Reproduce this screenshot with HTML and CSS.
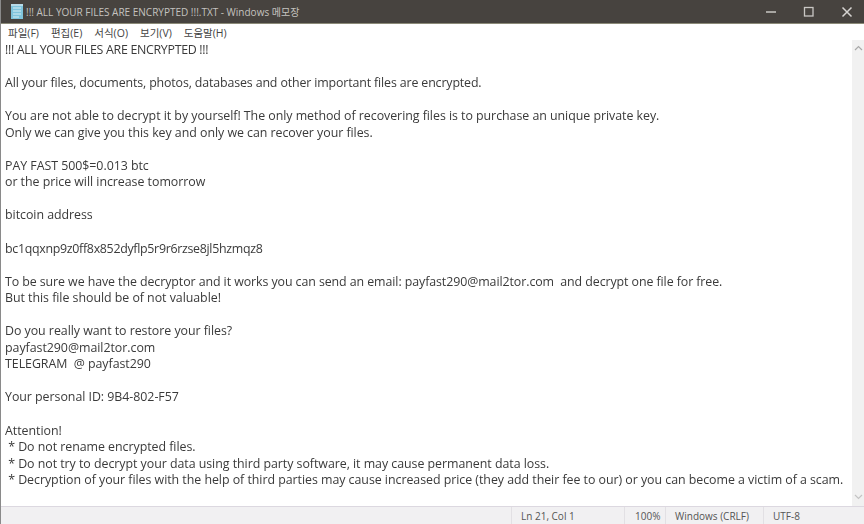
FILE: index.html
```html
<!DOCTYPE html>
<html lang="ko">
<head>
<meta charset="utf-8">
<title>Notepad</title>
<link rel="stylesheet" href="styles.css">
</head>
<body>
<div class="window">
  <header class="titlebar">
    <svg class="app-icon" width="14" height="16" viewBox="0 0 14 16"><rect x="1" y="1" width="12" height="14" fill="#7fc4dc"/><path d="M3 4h8M3 7h8M3 10h8M3 13h6" stroke="#d8eef5" stroke-width="1"/><rect x="1" y="0" width="12" height="2" fill="#b8dbe8"/></svg>
    <span class="title">!!! ALL YOUR FILES ARE ENCRYPTED !!!.TXT - Windows 메모장</span>
    <div class="controls">
      <svg class="ctl" width="12" height="12" viewBox="0 0 12 12"><path d="M1 6h10" stroke="#c9c7c4" stroke-width="1.5"/></svg>
      <svg class="ctl" width="12" height="12" viewBox="0 0 12 12"><rect x="1.5" y="1.5" width="8.5" height="8.5" fill="none" stroke="#c9c7c4" stroke-width="1.3"/></svg>
      <svg class="ctl" width="12" height="12" viewBox="0 0 12 12"><path d="M1.5 1.5l9 9M10.5 1.5l-9 9" stroke="#d6d4d1" stroke-width="1.5"/></svg>
    </div>
  </header>
  <nav class="menubar">
    <span>파일(F)</span><span>편집(E)</span><span>서식(O)</span><span>보기(V)</span><span>도움말(H)</span>
  </nav>
  <main class="editor">
<pre class="text"><span class="tight-lg">!!! ALL YOUR FILES ARE ENCRYPTED !!!</span>

<span class="tight-sm">All your files, documents, photos, databases and other important files are encrypted.</span>

You are not able to decrypt it by yourself! The only method of recovering files is to purchase an unique private key.
Only we can give you this key and only we can recover your files.

PAY FAST 500$=0.013 btc
or the price will increase tomorrow

bitcoin address

<span class="tight-lg">bc1qqxnp9z0ff8x852dyflp5r9r6rzse8jl5hzmqz8</span>

<span class="tight-xs">To be sure we have the decryptor and it works you can send an email: payfast290@mail2tor.com  and decrypt one file for free.</span>
But this file should be of not valuable!

Do you really want to restore your files?
payfast290@mail2tor.com
TELEGRAM  @ payfast290

Your personal ID: 9B4-802-F57

Attention!
 * Do not rename encrypted files.
 * Do not try to decrypt your data using third party software, it may cause permanent data loss.
 * Decryption of your files with the help of third parties may cause increased price (they add their fee to our) or you can become a victim of a scam.</pre>
    <div class="scrollbar">
      <svg width="9" height="6" viewBox="0 0 9 6"><path d="M1 5l3.500-3.500L8 5" fill="none" stroke="#a9a9a9" stroke-width="1.2"/></svg>
      <svg width="9" height="6" viewBox="0 0 9 6"><path d="M1 1l3.500 3.500L8 1" fill="none" stroke="#c4c4c4" stroke-width="1.2"/></svg>
    </div>
  </main>
  <footer class="statusbar">
    <span class="cell cell-pos">Ln 21, Col 1</span>
    <span class="cell cell-zoom">100%</span>
    <span class="cell cell-eol">Windows (CRLF)</span>
    <span class="cell cell-enc">UTF-8</span>
  </footer>
</div>
</body>
</html>
```
FILE: styles.css
```css
* { box-sizing: border-box; }
html, body { margin: 0; height: 100%; overflow: hidden; background: #fff; }
.window {
  width: 864px; height: 524px; display: flex; flex-direction: column;
  font-family: "Open Sans", "Noto Sans CJK KR", sans-serif; color: #3c3c3c;
  border-left: 1px solid #8a8a8a; filter: blur(0.35px);
}
.titlebar {
  height: 24px; flex: none; background: #47433f; display: flex; align-items: center;
  padding-left: 9px; color: #c4c2bf; font-size: 10px; border-bottom: 1px solid #8b8a78;
}
.app-icon { margin-right: 2px; }
.title { flex: 1; white-space: nowrap; }
.controls { display: flex; gap: 26px; padding-right: 11px; }
.ctl { display: block; }
.menubar {
  height: 16px; flex: none; display: flex; gap: 12px; padding-left: 7px; align-items: center;
  font-size: 10.500px; color: #444; background: #fff;
}
.editor { flex: 1; display: flex; min-height: 0; }
.text {
  flex: 1; margin: 0; padding: 2px 0 0 4px; font-family: "Open Sans", sans-serif; font-size: 12.400px;
  line-height: 16.54px; white-space: pre; overflow: hidden; color: #3a3a3a; letter-spacing: -0.04px;
}
.tight-lg { letter-spacing: -0.3px; }
.tight-sm { letter-spacing: -0.14px; }
.tight-xs { letter-spacing: -0.08px; }
.scrollbar {
  width: 12px; flex: none; background: #f1f1f1; display: flex; flex-direction: column;
  justify-content: space-between; align-items: center; padding: 5px 0 6px;
}
.statusbar {
  height: 18px; flex: none; background: #f1f0f2; border-top: 1px solid #dcd8e0;
  display: flex; font-size: 10px; color: #555; align-items: center;
}
.cell { height: 100%; display: flex; align-items: center; padding-left: 9px; border-left: 1px solid #e2e0e4; }
.cell-pos { margin-left: 510px; width: 113px; }
.cell-zoom { width: 41px; padding-left: 10px; }
.cell-eol { width: 98px; }
.cell-enc { flex: 1; }
```
